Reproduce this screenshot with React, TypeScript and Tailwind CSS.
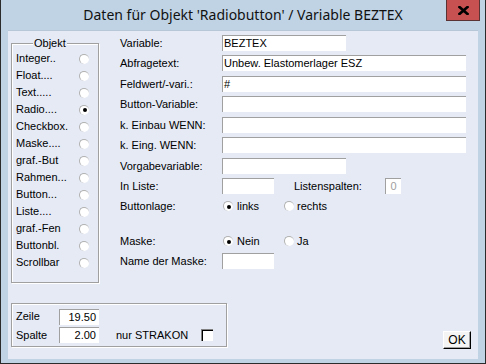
import React from "react";

const F = { fontFamily: '"Liberation Sans", Arial, sans-serif' };

function Input({ w, value, align = "left", gray = false }: { w: number; value?: string; align?: "left" | "right" | "center"; gray?: boolean }) {
  return (
    <div
      className={
        "h-[16px] bg-white border-t border-l border-[#a0a0a0] text-[11px] leading-[15px] overflow-hidden whitespace-nowrap " +
        (align === "right" ? "text-right pr-[3px] " : align === "center" ? "text-center " : "pl-[1px] ") +
        (gray ? "text-[#a0a0a0]" : "text-black")
      }
      style={{ width: w }}
    >
      {value}
    </div>
  );
}

function Radio({ on = false }: { on?: boolean }) {
  return (
    <div className="w-[10px] h-[10px] rounded-full bg-white border-t border-l border-[#b0b0b0] flex items-center justify-center shrink-0">
      {on && <div className="w-[4px] h-[4px] rounded-full bg-black" />}
    </div>
  );
}

function Row({ label, h, children }: { label: string; h: number; children?: React.ReactNode }) {
  return (
    <div className="flex items-start" style={{ height: h }}>
      <div className="w-[102px] h-[16px] leading-[16px] text-[11px] whitespace-nowrap">{label}</div>
      {children}
    </div>
  );
}

const objekte: [string, boolean][] = [
  ["Integer..", false],
  ["Float....", false],
  ["Text.....", false],
  ["Radio....", true],
  ["Checkbox.", false],
  ["Maske....", false],
  ["graf.-But", false],
  ["Rahmen...", false],
  ["Button...", false],
  ["Liste....", false],
  ["graf.-Fen", false],
  ["Buttonbl.", false],
  ["Scrollbar", false],
];

export default function App() {
  return (
    <div className="w-[486px] h-[364px] bg-[#bfd3e5] border-l border-r border-b border-[#2b2b2b] flex flex-col text-black">
      <div className="h-[30px] relative flex items-center justify-center shrink-0">
        <span className="text-[14px] text-[#111] pb-[1px]" style={{ fontFamily: '"Noto Sans", "Open Sans", sans-serif' }}>
          Daten für Objekt 'Radiobutton' / Variable BEZTEX
        </span>
        <div className="absolute right-[5px] top-0 w-[34px] h-[21px] bg-[#c75050] border border-t-0 border-[#5a3434] flex items-center justify-center">
          <svg width="11" height="9" viewBox="0 0 11 9">
            <path d="M1.5 1 L9.5 8 M9.5 1 L1.5 8" stroke="#000" strokeWidth="2.6" strokeLinecap="square" />
          </svg>
        </div>
      </div>

      <div className="mx-[7px] mb-[4px] flex-1 bg-[#e5eaf5] border-t border-[#b7c7d8] flex flex-col" style={F}>
        <div className="flex items-start">
          {/* Objekt group box */}
          <div className="ml-[3px] mt-[12px] w-[88px] h-[240px] relative border border-[#a0a0a0] shadow-[inset_1px_1px_0_#ffffff,1px_1px_0_#ffffff] pt-[6px] pl-[4px]">
            <div className="absolute -top-[8px] left-[21px] px-[1px] bg-[#e5eaf5] text-[11px] leading-[14px]">Objekt</div>
            {objekte.map(([name, on]) => (
              <div key={name} className="h-[17px] flex items-center">
                <div className="w-[63px] text-[11px] whitespace-nowrap">{name}</div>
                <Radio on={on} />
              </div>
            ))}
          </div>

          {/* Form */}
          <div className="ml-[21px] mt-[4px] flex flex-col">
            <Row label="Variable:" h={20}><Input w={124} value="BEZTEX" /></Row>
            <Row label="Abfragetext:" h={21}><Input w={244} value="Unbew. Elastomerlager ESZ" /></Row>
            <Row label="Feldwert/-vari.:" h={20}><Input w={244} value="#" /></Row>
            <Row label="Button-Variable:" h={21}><Input w={244} /></Row>
            <Row label="k. Einbau WENN:" h={20}><Input w={244} /></Row>
            <Row label="k. Eing. WENN:" h={21}><Input w={244} /></Row>
            <Row label="Vorgabevariable:" h={20}><Input w={124} /></Row>
            <Row label="In Liste:" h={20}>
              <Input w={52} />
              <div className="ml-[20px] w-[91px] h-[16px] leading-[16px] text-[11px]">Listenspalten:</div>
              <Input w={16} value="0" align="center" gray />
            </Row>
            <Row label="Buttonlage:" h={35}>
              <div className="flex items-center h-[16px]">
                <div className="ml-[1px]"><Radio on /></div>
                <span className="ml-[4px] w-[47px] text-[11px]">links</span>
                <Radio />
                <span className="ml-[3px] text-[11px]">rechts</span>
              </div>
            </Row>
            <Row label="Maske:" h={20}>
              <div className="flex items-center h-[16px]">
                <div className="ml-[1px]"><Radio on /></div>
                <span className="ml-[4px] w-[47px] text-[11px]">Nein</span>
                <Radio />
                <span className="ml-[3px] text-[11px]">Ja</span>
              </div>
            </Row>
            <Row label="Name der Maske:" h={20}><Input w={52} /></Row>
          </div>
        </div>

        <div className="flex items-start mt-[20px]">
          {/* bottom group box */}
          <div className="ml-[3px] w-[216px] h-[44px] border border-[#a0a0a0] shadow-[inset_1px_1px_0_#ffffff,1px_1px_0_#ffffff] pt-[2px] pl-[4px]">
            <div className="flex items-center h-[21px]">
              <div className="w-[43px] text-[11px]">Zeile</div>
              <Input w={40} value="19.50" align="right" />
            </div>
            <div className="flex items-center h-[16px]">
              <div className="w-[43px] text-[11px]">Spalte</div>
              <Input w={40} value="2.00" align="right" />
              <div className="ml-[17px] w-[85px] text-[11px]">nur STRAKON</div>
              <div className="w-[12px] h-[12px] bg-white border-t border-l border-[#808080] shadow-[inset_1px_1px_0_#000000]" />
            </div>
          </div>
          <div className="ml-[216px] mt-[28px] w-[28px] h-[18px] bg-[#f4f4f4] border-t border-l border-white border-r border-b border-r-black border-b-black shadow-[inset_-1px_-1px_0_#a0a0a0] flex items-center justify-center text-[12px] leading-none">
            OK
          </div>
        </div>
      </div>
    </div>
  );
}
